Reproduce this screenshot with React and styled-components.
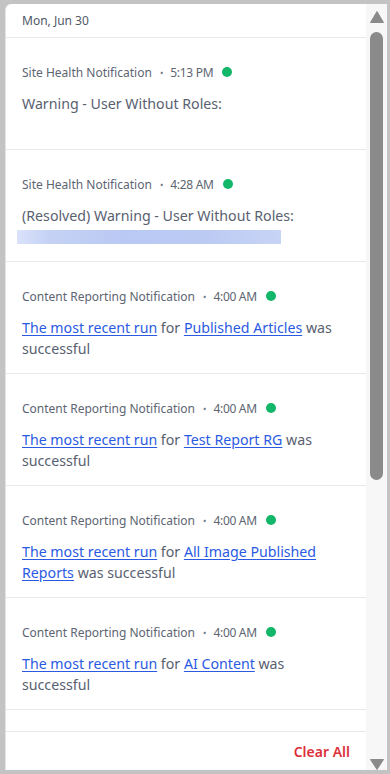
import React from "react";
import styled, { createGlobalStyle } from "styled-components";

const Global = createGlobalStyle`
  html, body { margin: 0; padding: 0; background: #c3c3c3; }
  body { font-family: "Noto Sans", "Open Sans", sans-serif; }
  * { box-sizing: border-box; }
`;

const Frame = styled.div`
  height: 774px;
  padding: 4px 3px 4px 5px;
  display: flex;
`;

const Panel = styled.div`
  flex: 1;
  display: flex;
  background: #fff;
  border-top-left-radius: 6px;
  border-left: 1px solid #e4e4e4;
  overflow: hidden;
`;

const Main = styled.div`
  flex: 1;
  min-width: 0;
  display: flex;
  flex-direction: column;
`;

const Header = styled.div`
  height: 34px;
  flex: none;
  display: flex;
  align-items: center;
  padding: 0 16px 1px;
  border-bottom: 1px solid #e6e8ec;
  font-size: 12px;
  color: #4f5866;
`;

const List = styled.div`
  flex: 1;
  overflow: hidden;
`;

const Item = styled.div`
  height: 112px;
  padding: 25px 16px 0;
  border-bottom: 1px solid #e6e8ec;
`;

const Meta = styled.div`
  display: flex;
  align-items: center;
  height: 18px;
  font-size: 12px;
  color: #5d6572;
  white-space: nowrap;
`;

const Sep = styled.span`
  margin: 0 7px 0 8px;
  font-size: 9px;
  color: #6b7280;
`;

const Time = styled.span`
  letter-spacing: -0.3px;
`;

const Dot = styled.span`
  width: 10px;
  height: 10px;
  border-radius: 50%;
  background: #12b76a;
  margin-left: 9px;
`;

const Body = styled.div`
  margin-top: 12px;
  font-size: 14.2px;
  line-height: 21px;
  color: #596170;
`;

const Link = styled.a`
  color: #2b5ae2;
  text-decoration: underline;
  text-underline-offset: 2px;
  cursor: pointer;
`;

const Redacted = styled.div`
  margin: 4px 0 0 -5px;
  width: 264px;
  height: 14px;
  background: linear-gradient(
    90deg,
    #dbe3fa 0%,
    #c5d2f5 12%,
    #bac9f3 40%,
    #bbcaf3 70%,
    #c8d4f6 100%
  );
`;

const Footer = styled.div`
  height: 39px;
  flex: none;
  display: flex;
  align-items: center;
  justify-content: flex-end;
  padding: 0 16px 0 0;
  border-top: 1px solid #e6e8ec;
`;

const ClearAll = styled.button`
  border: 0;
  background: none;
  padding: 0;
  font-family: inherit;
  font-size: 14px;
  font-weight: 600;
  color: #dc2f3b;
  cursor: pointer;
`;

const Scrollbar = styled.div`
  width: 21px;
  flex: none;
  background: #f7f7f7;
  display: flex;
  flex-direction: column;
  align-items: center;
`;

const Arrow = styled.svg`
  display: block;
  flex: none;
  margin-top: ${(p) => p.$top || 0}px;
`;

const Thumb = styled.div`
  width: 13px;
  height: 448px;
  margin-top: 9px;
  border-radius: 7px;
  background: #8a8a8a;
`;

const Spacer = styled.div`
  flex: 1;
`;

const items = [
  {
    source: "Site Health Notification",
    time: "5:13 PM",
    body: <>Warning - User Without Roles:</>,
  },
  {
    source: "Site Health Notification",
    time: "4:28 AM",
    body: <>(Resolved) Warning - User Without Roles:</>,
    redacted: true,
  },
  {
    source: "Content Reporting Notification",
    time: "4:00 AM",
    body: (
      <>
        <Link>The most recent run</Link> for <Link>Published Articles</Link> was
        successful
      </>
    ),
  },
  {
    source: "Content Reporting Notification",
    time: "4:00 AM",
    body: (
      <>
        <Link>The most recent run</Link> for <Link>Test Report RG</Link> was
        successful
      </>
    ),
  },
  {
    source: "Content Reporting Notification",
    time: "4:00 AM",
    body: (
      <>
        <Link>The most recent run</Link> for <Link>All Image Published Reports</Link>{" "}
        was successful
      </>
    ),
  },
  {
    source: "Content Reporting Notification",
    time: "4:00 AM",
    body: (
      <>
        <Link>The most recent run</Link> for <Link>AI Content</Link> was successful
      </>
    ),
  },
];

export default function App() {
  return (
    <>
      <Global />
      <Frame>
        <Panel>
          <Main>
            <Header>Mon, Jun 30</Header>
            <List>
              {items.map((it, i) => (
                <Item key={i}>
                  <Meta>
                    <span>{it.source}</span>
                    <Sep>•</Sep>
                    <Time>{it.time}</Time>
                    <Dot />
                  </Meta>
                  <Body>{it.body}</Body>
                  {it.redacted && <Redacted />}
                </Item>
              ))}
            </List>
            <Footer>
              <ClearAll>Clear All</ClearAll>
            </Footer>
          </Main>
          <Scrollbar>
            <Arrow $top={7} width="14" height="12" viewBox="0 0 14 12">
              <path d="M7 0.5 L13.5 11.5 L0.5 11.5 Z" fill="#8a8a8a" strokeLinejoin="round" stroke="#8a8a8a" strokeWidth="1" />
            </Arrow>
            <Thumb />
            <Spacer />
            <Arrow width="14" height="11" viewBox="0 0 14 11">
              <path d="M0.5 0.5 L13.5 0.5 L7 10.5 Z" fill="#8a8a8a" strokeLinejoin="round" stroke="#8a8a8a" strokeWidth="1" />
            </Arrow>
          </Scrollbar>
        </Panel>
      </Frame>
    </>
  );
}
